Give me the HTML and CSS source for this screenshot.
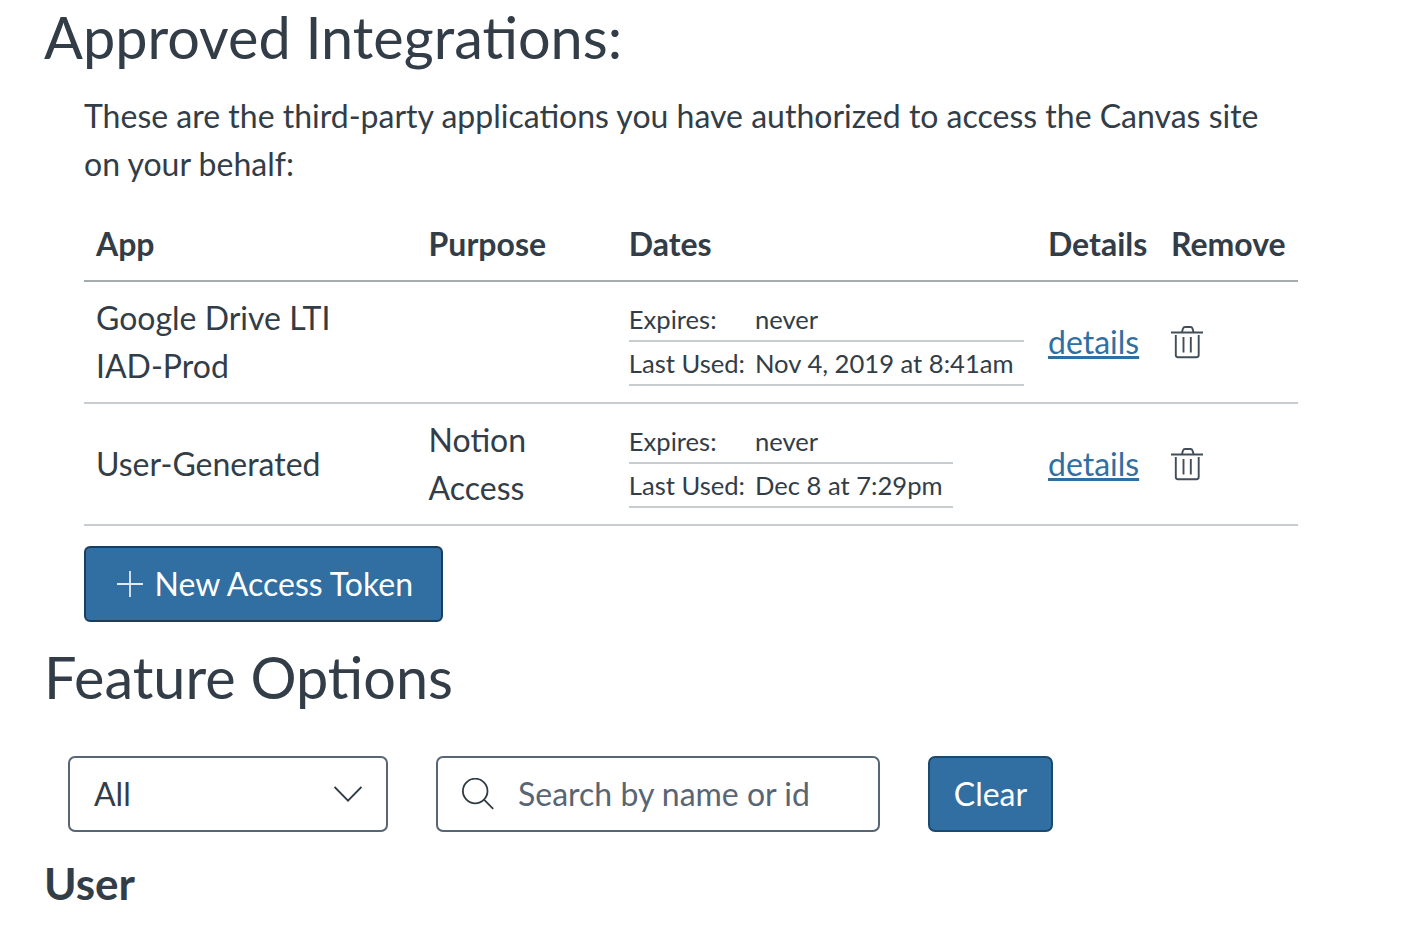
FILE: index.html
```html
<!DOCTYPE html>
<html lang="en">
<head>
<meta charset="utf-8">
<title>Settings</title>
<link rel="stylesheet" href="styles.css">
</head>
<body>
<main class="page">
<h1 class="heading">Approved Integrations:</h1>
<section class="integrations">
<p class="intro">These are the third-party applications you have authorized to access the Canvas site on your behalf:</p>
<div class="row head"><div>App</div><div>Purpose</div><div>Dates</div><div>Details</div><div>Remove</div></div>
<div class="row">
<div>Google Drive LTI<br>IAD-Prod</div><div></div>
<div><div class="dates"><div class="date"><span>Expires:</span><span>never</span></div><div class="date"><span>Last Used:</span><span>Nov 4, 2019 at 8:41am</span></div></div></div>
<div><a class="link" href="#">details</a></div>
<div><svg class="trash" viewBox="0 0 32 34"><path d="M0 7.500h32M10.800 7.500l1.200-4q.5-1.500 2-1.500h5.500q1.500 0 2 1.500l1.200 4M4.800 10v20q0 2.200 2.200 2.200h18.500q2.200 0 2.200-2.200V10M12.500 12v15.500M19.800 12v15.500"/></svg></div>
</div>
<div class="row">
<div>User-Generated</div><div>Notion<br>Access</div>
<div><div class="dates"><div class="date"><span>Expires:</span><span>never</span></div><div class="date"><span>Last Used:</span><span>Dec 8 at 7:29pm</span></div></div></div>
<div><a class="link" href="#">details</a></div>
<div><svg class="trash" viewBox="0 0 32 34"><path d="M0 7.500h32M10.800 7.500l1.200-4q.5-1.500 2-1.500h5.500q1.500 0 2 1.500l1.200 4M4.800 10v20q0 2.200 2.200 2.200h18.500q2.200 0 2.200-2.200V10M12.500 12v15.500M19.800 12v15.500"/></svg></div>
</div>
<button class="button token"><svg class="plus" viewBox="0 0 26 26"><path d="M13 0v26M0 13h26"/></svg><span>New Access Token</span></button>
</section>
<h1 class="heading features">Feature Options</h1>
<div class="filters">
<div class="field select"><span>All</span><svg class="chevron" viewBox="0 0 28 16"><path d="M.6 1l13.400 13.600L27.400 1"/></svg></div>
<div class="field search"><svg class="lens" viewBox="0 0 32 32"><circle cx="13.200" cy="13" r="12.300"/><path d="M22 21.700L31.200 30.800"/></svg><span>Search by name or id</span></div>
<button class="button clear">Clear</button>
</div>
<h2 class="user">User</h2>
</main>
</body>
</html>
```
FILE: styles.css
```css
* { box-sizing: border-box; }
body { margin: 0; background: #fff; color: #323d47; font: 32px/48px Lato, sans-serif; overflow: hidden; }
.page { height: 928px; padding-left: 44px; }
.heading { margin: 0; font-size: 57.600px; font-weight: 400; line-height: 74px; }
.integrations { width: 1214px; margin-left: 40px; }
.intro { margin: 18px 0 21px; }
.row { display: grid; grid-template-columns: 332.600px 200.200px 419.200px 123px 1fr; align-items: center; height: 122px; padding-left: 12px; border-bottom: 2px solid #c7cdd1; }
.head { height: 73px; font-weight: 700; border-color: #a5acb2; padding-bottom: 2px; }
.dates { width: max-content; font-size: 25.600px; line-height: 38px; }
.date { display: grid; grid-template-columns: 126.200px auto; height: 44px; padding: 2px 10.400px 2px 0; border-bottom: 2px solid #c7cdd1; }
.link { color: #2f6fa4; text-decoration: underline; text-decoration-thickness: 3px; }
.trash { display: block; width: 32px; height: 34px; stroke: #414e5a; stroke-width: 1.900px; overflow: visible; }
svg { fill: none; stroke: #2d3b45; stroke-width: 1.800px; }
.button { font: inherit; color: #fff; background: #316ea1; border: 2px solid #1c4a6e; border-radius: 7px; height: 76px; padding: 0; }
.token { display: flex; align-items: center; width: 359px; margin-top: 20px; padding-left: 31px; border-color: #1a3f5c; border-radius: 6px; }
.plus { width: 26px; height: 26px; margin-right: 11.500px; stroke: #e3ebf2; }
.features { margin-top: 18px; }
.filters { display: flex; gap: 48px; margin: 42px 0 0 24px; }
.field { display: flex; align-items: center; height: 76px; border: 2px solid #586573; border-radius: 7px; padding: 0 24px; }
.select { width: 320px; justify-content: space-between; }
.chevron { width: 28px; height: 16px; }
.search { width: 444px; color: #586573; gap: 24px; }
.lens { width: 32px; height: 32px; }
.clear { width: 125px; }
.user { margin: 21px 0 0; font-size: 44px; line-height: 60px; }
```
